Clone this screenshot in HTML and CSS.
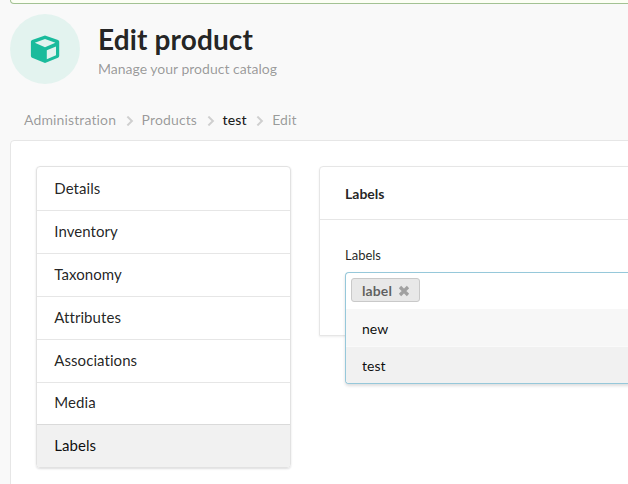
FILE: index.html
```html
<!DOCTYPE html>
<html lang="en">
<head>
<meta charset="utf-8">
<title>Edit product</title>
<link rel="stylesheet" href="styles.css">
</head>
<body>
<div class="message"></div>
<header class="header">
  <div class="badge">
    <svg width="30" height="30" viewBox="0 0 30 30">
      <path class="cube" d="M15 1.6 L28 6 Q29.2 6.5 29.2 7.8 V21.8 Q29.2 23.1 28 23.7 L15 29 L2.1 23.7 Q.9 23.1 .9 21.8 V7.8 Q.9 6.5 2.1 6Z"/>
      <path class="face" d="M15 4.9 L25.4 8.8 L15 13.2 L4.8 8.8Z M16.8 16.2 L26 12.6 V21.2 L16.8 25.2Z"/>
    </svg>
  </div>
  <div>
    <h1 class="title">Edit product</h1>
    <div class="subtitle">Manage your product catalog</div>
  </div>
</header>
<nav class="breadcrumb">
  <span>Administration</span>
  <svg class="chevron" viewBox="0 0 8 10"><path d="M1.4 .6 L5.9 5 L1.4 9.4"/></svg>
  <span>Products</span>
  <svg class="chevron" viewBox="0 0 8 10"><path d="M1.4 .6 L5.9 5 L1.4 9.4"/></svg>
  <span class="current">test</span>
  <svg class="chevron" viewBox="0 0 8 10"><path d="M1.4 .6 L5.9 5 L1.4 9.4"/></svg>
  <span>Edit</span>
</nav>
<main class="segment">
  <ul class="menu">
    <li class="item">Details</li>
    <li class="item">Inventory</li>
    <li class="item">Taxonomy</li>
    <li class="item">Attributes</li>
    <li class="item">Associations</li>
    <li class="item">Media</li>
    <li class="item active">Labels</li>
  </ul>
  <section class="panel">
    <h2 class="panel-title">Labels</h2>
    <div class="panel-body">
      <div class="field-label">Labels</div>
      <div class="dropdown">
        <div class="selection">
          <span class="tag">label
            <svg class="remove" viewBox="0 0 12 12"><path d="M2 2 L10 10 M10 2 L2 10"/></svg>
          </span>
        </div>
        <div class="option">new</div>
        <div class="option hovered">test</div>
      </div>
    </div>
  </section>
</main>
</body>
</html>
```
FILE: styles.css
```css
* { box-sizing: border-box; }
body {
  margin: 0;
  height: 484px;
  overflow: hidden;
  background: #f9f9f9;
  color: rgba(0, 0, 0, .87);
  font: 14px/20px Lato, "Liberation Sans", sans-serif;
}
.message {
  height: 4px;
  margin: 0 -10px 0 10px;
  background: #fcfff5;
  border: 1px solid #a3c293;
  border-top: 0;
  border-radius: 0 0 4px 4px;
}
.header {
  display: flex;
  gap: 18px;
  margin: 10px 0 0 10px;
  height: 70px;
}
.badge {
  display: flex;
  align-items: center;
  justify-content: center;
  width: 70px;
  height: 70px;
  border-radius: 50%;
  background: #e3f3ef;
}
.cube { fill: #1abb9c; }
.face { fill: #e3f3ef; }
.title {
  margin: 7px 0 0;
  font-size: 28px;
  line-height: 36px;
  font-weight: 700;
  letter-spacing: .13px;
}
.subtitle { margin-top: 2px; color: rgba(0, 0, 0, .4); }
.breadcrumb {
  display: flex;
  align-items: center;
  height: 20px;
  margin: 26px 0 0 24px;
  color: rgba(0, 0, 0, .4);
  letter-spacing: .13px;
}
.chevron {
  width: 8px;
  height: 10px;
  margin: 1px 8px 0 9.5px;
  fill: none;
  stroke: #cfcfcf;
  stroke-width: 2;
}
.current { color: rgba(0, 0, 0, .9); font-weight: 500; }
.segment {
  display: flex;
  align-items: flex-start;
  gap: 28px;
  height: 360px;
  margin: 10px -10px 0 10px;
  padding: 25px 0 0 25px;
  background: #fff;
  border: 1px solid #e6e6e6;
  border-radius: 4px;
}
.menu {
  flex: none;
  width: 255px;
  margin: 0;
  padding: 0;
  list-style: none;
  border: 1px solid #e2e2e2;
  border-radius: 4px;
  box-shadow: 0 1px 2px rgba(34, 36, 38, .15);
  overflow: hidden;
}
.item {
  height: 42.88px;
  padding: 10px 17.3px 0;
  font-size: 15px;
  line-height: 20px;
  letter-spacing: .06px;
}
.item + .item { border-top: 1px solid #e6e6e6; }
.item:first-child { height: 43px; padding-top: 11px; }
.item:nth-child(6) { padding-top: 9.4px; }
.item.active { background: #f1f1f1; border-top-color: #dadada; color: rgba(0, 0, 0, .95); }
.panel {
  flex: 1;
  height: 170px;
  border: 1px solid #e6e6e6;
  border-radius: 4px 0 0 0;
  box-shadow: 0 1px 2px rgba(34, 36, 38, .08);
}
.panel-title {
  height: 53px;
  margin: 0;
  padding: 17px 25px 0;
  border-bottom: 1px solid #e6e6e6;
  font-size: 14px;
  line-height: 20px;
}
.panel-body { padding: 25px 0 0 25px; }
.field-label { font-size: 13px; }
.dropdown {
  height: 112px;
  margin-top: 7px;
  background: #fff;
  border: 1px solid #96c8da;
  border-right: 0;
  border-radius: 4px 0 0 4px;
  box-shadow: 0 2px 3px rgba(34, 36, 38, .15);
  overflow: hidden;
}
.selection { height: 36px; padding: 5px; }
.tag {
  display: flex;
  align-items: center;
  width: 69px;
  height: 24px;
  padding: 1px 0 0 10px;
  border: 1px solid #c9c9c9;
  border-radius: 3px;
  background: #e8e8e8;
  color: rgba(0, 0, 0, .6);
  font-weight: 700;
  letter-spacing: .1px;
}
.remove {
  width: 12px;
  height: 12px;
  margin-left: 6.3px;
  fill: none;
  stroke: #a0a0a0;
  stroke-width: 3.3;
}
.option {
  height: 37px;
  padding: 10px 16px 0;
  background: #f7f7f7;
  color: rgba(0, 0, 0, .95);
}
.option.hovered { background: #f1f1f1; border-top: 1px solid #fafafa; padding-top: 9px; }
```
